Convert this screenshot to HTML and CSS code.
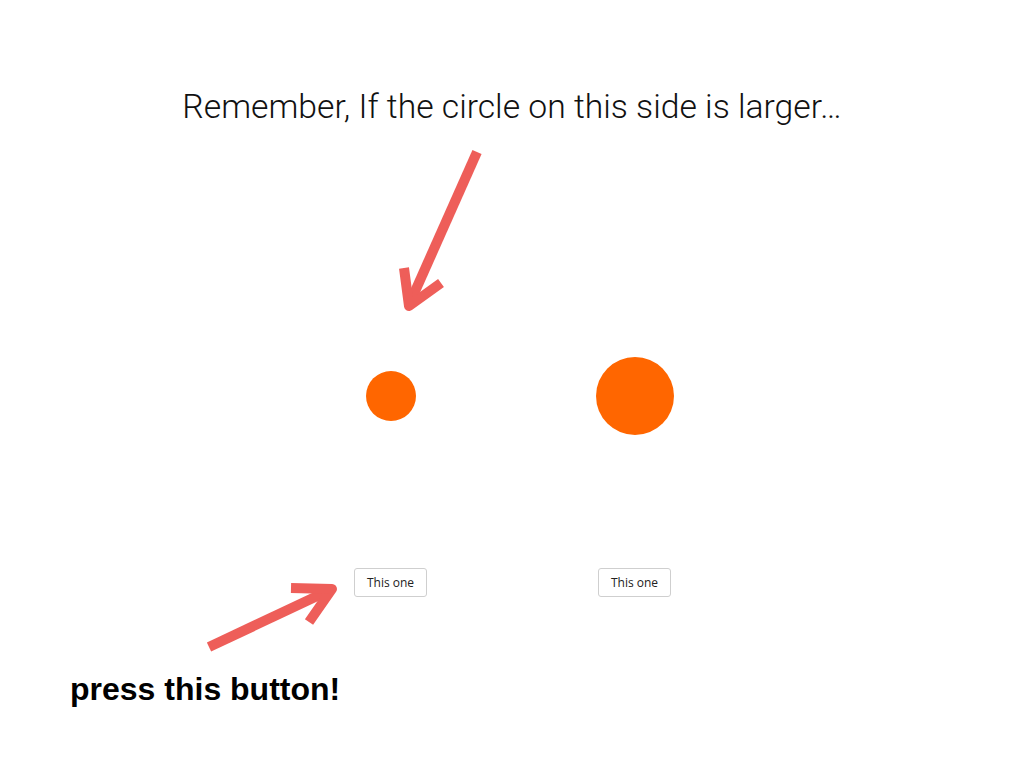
FILE: index.html
```html
<!DOCTYPE html>
<html>
<head>
<meta charset="utf-8">
<link rel="stylesheet" href="styles.css">
</head>
<body>
<main class="slide">
  <h1 class="title">Remember, If the circle on this side is larger…</h1>
  <section class="stage">
    <div class="col">
      <div class="dot-slot"><span class="dot dot-small"></span></div>
      <button class="choice">This one</button>
    </div>
    <div class="col">
      <div class="dot-slot"><span class="dot dot-large"></span></div>
      <button class="choice">This one</button>
    </div>
  </section>
  <p class="hint">press this button!</p>
  <svg class="arrows" width="1024" height="768" viewBox="0 0 1024 768" aria-hidden="true">
    <g fill="none" stroke="#ee5e59" stroke-width="10">
      <line x1="477" y1="152" x2="409" y2="305" stroke-linecap="butt"/>
      <polyline points="404,268 409,306 441,283" stroke-linejoin="round"/>
      <line x1="209" y1="647" x2="330" y2="590"/>
      <polyline points="291,588 332,589 309,622" stroke-linejoin="round"/>
    </g>
  </svg>
</main>
</body>
</html>
```

FILE: styles.css
```css
html, body {
  margin: 0;
  padding: 0;
  background: #ffffff;
}

.slide {
  position: relative;
  width: 1024px;
  height: 768px;
  overflow: hidden;
  display: flex;
  flex-direction: column;
}

.title {
  margin: 87px 0 0;
  font-family: Roboto, "Liberation Sans", sans-serif;
  font-weight: 300;
  font-size: 33.7px;
  line-height: 39px;
  color: #111;
  text-align: center;
}

.stage {
  margin-top: 230px;
  display: flex;
  justify-content: center;
  padding-left: 1px;
}

.col {
  width: 244px;
  display: flex;
  flex-direction: column;
  align-items: center;
}

.dot-slot {
  height: 80px;
  display: flex;
  align-items: center;
  justify-content: center;
}

.dot {
  display: block;
  border-radius: 50%;
  background: #ff6600;
}

.dot-small {
  width: 50px;
  height: 50px;
}

.dot-large {
  width: 78px;
  height: 78px;
}

.choice {
  margin-top: 132px;
  box-sizing: border-box;
  height: 29px;
  padding: 0 12px;
  border: 1px solid #cfcfcf;
  border-radius: 3px;
  background: #fff;
  font-family: "Open Sans", sans-serif;
  font-size: 12px;
  color: #222;
}

.hint {
  margin: 74px 0 0 70px;
  font-family: "Liberation Sans", Arial, sans-serif;
  font-weight: bold;
  font-size: 32px;
  line-height: 37px;
  color: #000;
}

.arrows {
  position: absolute;
  left: 0;
  top: 0;
  pointer-events: none;
}
```
